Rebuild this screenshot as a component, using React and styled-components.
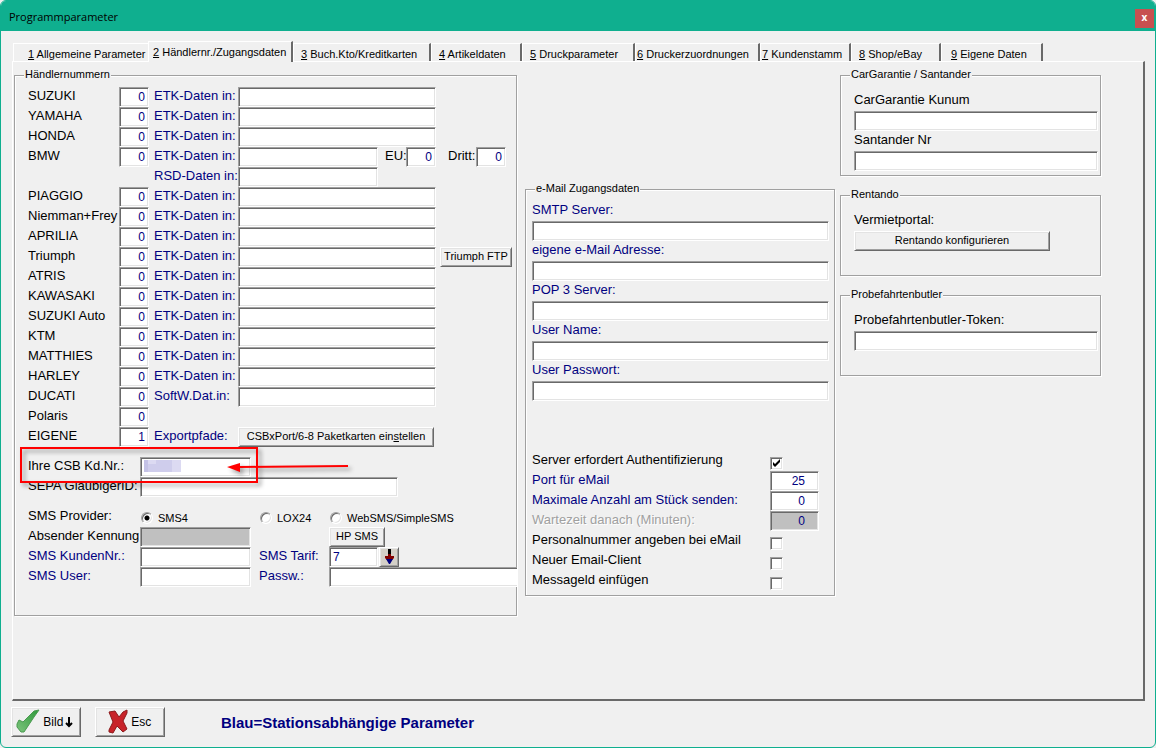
import React from "react";
import styled, { createGlobalStyle, css } from "styled-components";

const GlobalStyle = createGlobalStyle`
  * {
    box-sizing: border-box;
  }
  body {
    margin: 0;
    background: #f0f0f0;
    font-family: "Liberation Sans", Arial, sans-serif;
    font-size: 13px;
    color: #000;
  }
`;

const sunken = css`
  border: 1px solid;
  border-color: #a0a0a0 #fff #fff #a0a0a0;
  box-shadow: inset 1px 1px 0 #696969, inset -1px -1px 0 #e3e3e3;
`;

const raised = css`
  border: 1px solid;
  border-color: #fff #696969 #696969 #fff;
  box-shadow: inset 1px 1px 0 #e3e3e3, inset -1px -1px 0 #a0a0a0;
`;

const Window = styled.div`
  display: flex;
  flex-direction: column;
  min-height: 100vh;
  background: #f0f0f0;
  border: 1px solid #0faf8f;
  border-radius: 6px;
  overflow: hidden;
`;

const TitleBar = styled.header`
  display: flex;
  align-items: center;
  justify-content: space-between;
  height: 30px;
  padding: 0 1px 0 8px;
  background: #0faf8f;
`;

const Title = styled.h1`
  margin: 0;
  font-family: "Open Sans", sans-serif;
  font-size: 11px;
  font-weight: normal;
`;

const CloseButton = styled.button`
  width: 19px;
  height: 19px;
  margin-top: 4px;
  padding: 0 0 2px;
  border: 0;
  background: #c75050;
  color: #fff;
  font-family: "Open Sans", sans-serif;
  font-size: 10px;
  font-weight: bold;
  line-height: 16px;
`;

const Tabs = styled.nav`
  display: flex;
  align-items: flex-end;
  height: 30px;
  padding-left: 12px;
`;

const Tab = styled.button`
  flex: none;
  width: ${(props) => props.$width}px;
  height: ${(props) => (props.$active ? 21 : 18)}px;
  margin-bottom: ${(props) => (props.$active ? -1 : 0)}px;
  padding: ${(props) => (props.$active ? 0 : 3)}px 0 0 ${(props) => props.$indent}px;
  border: solid;
  border-width: 1px 2px 0 1px;
  border-color: #fff #696969 #fff #fff;
  background: #f0f0f0;
  font-family: inherit;
  font-size: 11px;
  line-height: ${(props) => (props.$active ? 18 : 14)}px;
  text-align: left;
  white-space: nowrap;
  color: #000;
  ${(props) =>
    props.$beforeActive &&
    css`
      border-right: 0;
    `}
  ${(props) =>
    props.$active &&
    css`
      position: relative;
    `}
`;

const Panel = styled.main`
  flex: 1;
  display: grid;
  grid-template-columns: minmax(503px, 503fr) minmax(318px, 318fr) minmax(266px, 266fr);
  align-items: start;
  margin: 0 10px 0 11px;
  padding: 6px 42px 0 1px;
  border: solid;
  border-width: 1px 2px 2px 1px;
  border-color: #fff #696969 #696969 #fff;
`;

const Group = styled.fieldset`
  min-width: 0;
  margin: 0;
  padding: ${(props) => props.$pad};
  border: 1px solid #a0a0a0;
  box-shadow: 1px 1px 0 #fff, inset 1px 1px 0 #fff;
`;

const Legend = styled.legend`
  margin-left: ${(props) => props.$shift || 0}px;
  padding: 0 1px 2px;
  background: #f0f0f0;
  font-size: 11px;
  line-height: 12px;
`;

const MailColumn = styled.div`
  padding: 114px 0 0 8px;
`;

const SideColumn = styled.div`
  display: flex;
  flex-direction: column;
  gap: 12px;
  padding-left: 5px;
`;

const Row = styled.div`
  display: flex;
  align-items: flex-start;
  position: relative;
  height: 20px;
  margin-top: ${(props) => (props.$spaced ? 10 : 0)}px;
`;

const Label = styled.label`
  flex: none;
  width: ${(props) => (props.$width ? props.$width + "px" : "auto")};
  height: 20px;
  line-height: 18px;
  white-space: nowrap;
  color: ${(props) => (props.$blue ? "#000080" : "#000")};
  ${(props) =>
    props.$off &&
    css`
      color: #a0a0a0;
      text-shadow: 1px 1px 0 #fff;
    `}
`;

const Stack = styled.div`
  display: flex;
  flex-direction: column;
`;

const Field = styled.input`
  ${sunken}
  flex: ${(props) => (props.$width ? "none" : "1 1 0")};
  width: ${(props) => (props.$width ? props.$width + "px" : "100%")};
  min-width: 0;
  height: 20px;
  padding: 0 3px;
  background: #fff;
  font-family: inherit;
  font-size: 12px;
  color: #000080;
  outline: none;
  &:disabled {
    background: #c0c0c0;
  }
`;

const StackField = styled(Field)`
  flex: none;
`;

const NumberField = styled(Field)`
  padding-right: ${(props) => props.$inset || 3}px;
  text-align: right;
`;

const OpenField = styled(Field)`
  margin-right: -1px;
  border-right: 0;
  box-shadow: inset 1px 1px 0 #696969, inset 0 -1px 0 #e3e3e3;
`;

const Gap = styled.span`
  flex: none;
  width: ${(props) => props.$width}px;
`;

const Tail = styled.div`
  display: flex;
  flex: none;
  width: ${(props) => props.$width}px;
`;

const Button = styled.button`
  ${raised}
  flex: none;
  width: ${(props) => props.$width}px;
  height: 20px;
  padding: 0 0 2px;
  background: #f0f0f0;
  font-family: inherit;
  font-size: 11px;
  white-space: nowrap;
  color: #000;
`;

const ArrowButton = styled(Button)`
  display: flex;
  align-items: center;
  justify-content: center;
  padding: 0;
  background: #d4d0c8;
`;

const Check = styled.input`
  ${sunken}
  appearance: none;
  width: 13px;
  height: 13px;
  margin: 6px 0 0;
  background: #fff;
  &:checked {
    background: #fff
      url("data:image/svg+xml,%3Csvg xmlns='http://www.w3.org/2000/svg' viewBox='0 0 11 11'%3E%3Cpath d='M2 4v3l2 2 5-5V1L4 6z'/%3E%3C/svg%3E");
  }
`;

const Radio = styled.input`
  ${sunken}
  appearance: none;
  flex: none;
  width: 12px;
  height: 12px;
  margin: 5px 5px 0 0;
  border-radius: 50%;
  background: #fff;
  &:checked {
    background: radial-gradient(circle, #000 2px, #fff 3px);
  }
`;

const RadioLabel = styled.label`
  display: flex;
  flex: none;
  width: ${(props) => props.$width}px;
  font-size: 11px;
  line-height: 22px;
  white-space: nowrap;
`;

const Mosaic = styled.svg`
  position: absolute;
  left: 116px;
  top: 3px;
`;

const Marker = styled.svg`
  position: absolute;
  left: -10px;
  top: -13px;
  z-index: 1;
  pointer-events: none;
  filter: drop-shadow(3px 3px 2px rgba(0, 0, 0, 0.4));
`;

const Footer = styled.footer`
  display: flex;
  align-items: center;
  height: 46px;
  padding: 0 10px 4px;
`;

const FooterButton = styled.button`
  ${raised}
  display: flex;
  align-items: center;
  width: 70px;
  height: 30px;
  margin-right: 14px;
  padding: 0 4px;
  background: #f0f0f0;
  font-family: inherit;
  font-size: 12px;
  color: #000;
`;

const Hint = styled.strong`
  margin-left: 42px;
  font-size: 15px;
  color: #000080;
`;

const tabs = [
  { text: "Allgemeine Parameter", width: 135, indent: 14, beforeActive: true },
  { text: "Händlernr./Zugangsdaten", width: 145, indent: 4, active: true },
  { text: "Buch.Kto/Kreditkarten", width: 138, indent: 7 },
  { text: "Artikeldaten", width: 91, indent: 7 },
  { text: "Druckparameter", width: 113, indent: 7 },
  { text: "Druckerzuordnungen", width: 125, indent: 1 },
  { text: "Kundenstamm", width: 91, indent: 1 },
  { text: "Shop/eBay", width: 90, indent: 7 },
  { text: "Eigene Daten", width: 102, indent: 9 },
];

const brandsAfterBmw = [
  "PIAGGIO",
  "Niemman+Frey",
  "APRILIA",
  "Triumph",
  "ATRIS",
  "KAWASAKI",
  "SUZUKI Auto",
  "KTM",
  "MATTHIES",
  "HARLEY",
  "DUCATI",
];

const mailFields = [
  "SMTP Server:",
  "eigene e-Mail Adresse:",
  "POP 3 Server:",
  "User Name:",
  "User Passwort:",
];

function BrandNumber({ name, value = "0" }) {
  return (
    <>
      <Label htmlFor={name} $width={91}>
        {name}
      </Label>
      <NumberField id={name} $width={30} defaultValue={value} />
      <Gap $width={5} />
    </>
  );
}

function BrandRow({ name, path = "ETK-Daten in:", children }) {
  return (
    <Row>
      <BrandNumber name={name} />
      <Label htmlFor={name + "-path"} $width={84} $blue>
        {path}
      </Label>
      <Field id={name + "-path"} />
      <Tail $width={80}>{children}</Tail>
    </Row>
  );
}

function StackedField({ label, blue }) {
  return (
    <Stack>
      <Label htmlFor={label} $blue={blue}>
        {label}
      </Label>
      <StackField id={label} />
    </Stack>
  );
}

function MailNumber({ label, value, off }) {
  return (
    <Row>
      <Label htmlFor={label} $width={238} $blue={!off} $off={off}>
        {label}
      </Label>
      <NumberField id={label} $width={49} $inset={13} defaultValue={value} disabled={off} />
    </Row>
  );
}

function MailCheck({ label, checked }) {
  return (
    <Row>
      <Label htmlFor={label} $width={238}>
        {label}
      </Label>
      <Check type="checkbox" id={label} defaultChecked={checked} />
    </Row>
  );
}

function DealerGroup() {
  return (
    <Group $pad="5px 0 28px 13px">
      <Legend $shift={-4}>Händlernummern</Legend>
      <BrandRow name="SUZUKI" />
      <BrandRow name="YAMAHA" />
      <BrandRow name="HONDA" />
      <Row>
        <BrandNumber name="BMW" />
        <Label htmlFor="bmw-etk" $width={84} $blue>
          ETK-Daten in:
        </Label>
        <Field id="bmw-etk" />
        <Tail $width={138}>
          <Gap $width={7} />
          <Label htmlFor="bmw-eu" $width={21}>
            EU:
          </Label>
          <NumberField id="bmw-eu" $width={30} defaultValue="0" />
          <Gap $width={12} />
          <Label htmlFor="bmw-dritt" $width={28}>
            Dritt:
          </Label>
          <NumberField id="bmw-dritt" $width={30} defaultValue="0" />
        </Tail>
      </Row>
      <Row>
        <Gap $width={126} />
        <Label htmlFor="bmw-rsd" $width={84} $blue>
          RSD-Daten in:
        </Label>
        <Field id="bmw-rsd" />
        <Tail $width={138} />
      </Row>
      {brandsAfterBmw.map((name) => (
        <BrandRow
          key={name}
          name={name}
          path={name === "DUCATI" ? "SoftW.Dat.in:" : "ETK-Daten in:"}
        >
          {name === "Triumph" && (
            <>
              <Gap $width={4} />
              <Button $width={72}>Triumph FTP</Button>
            </>
          )}
        </BrandRow>
      ))}
      <Row>
        <BrandNumber name="Polaris" />
      </Row>
      <Row>
        <BrandNumber name="EIGENE" value="1" />
        <Label as="span" $width={84} $blue>
          Exportpfade:
        </Label>
        <Button $width={196}>
          CSBxPort/6-8 Paketkarten ein<u>s</u>tellen
        </Button>
      </Row>

      <Row $spaced>
        <Label htmlFor="csb" $width={112}>
          Ihre CSB Kd.Nr.:
        </Label>
        <Field id="csb" $width={111} />
        <Mosaic width="37" height="12">
          <path fill="#dcdaf2" d="M0 0h37v12H0z" />
          <path fill="#c4c2e6" d="M0 0h4v12H0z" />
          <path fill="#cfcdec" d="M4 4h8v8H4zM12 0h16v12H12z" />
        </Mosaic>
        <Marker width="340" height="50" viewBox="0 0 340 50">
          <path d="M3 4h236v34H3z" fill="none" stroke="#f00" strokeWidth="2" />
          <path d="M222 23l108-1" stroke="#f00" strokeWidth="2" />
          <path d="M209 23l13-4v9z" fill="#f00" />
        </Marker>
      </Row>
      <Row>
        <Label htmlFor="sepa" $width={112}>
          SEPA GläubigerID:
        </Label>
        <Field id="sepa" />
        <Tail $width={118} />
      </Row>

      <Row $spaced>
        <Label as="span" $width={113}>
          SMS Provider:
        </Label>
        <RadioLabel $width={119}>
          <Radio type="radio" name="sms" defaultChecked />
          SMS4
        </RadioLabel>
        <RadioLabel $width={70}>
          <Radio type="radio" name="sms" />
          LOX24
        </RadioLabel>
        <RadioLabel $width={130}>
          <Radio type="radio" name="sms" />
          WebSMS/SimpleSMS
        </RadioLabel>
      </Row>
      <Row>
        <Label htmlFor="absender" $width={112}>
          Absender Kennung
        </Label>
        <Field id="absender" $width={111} disabled />
        <Gap $width={78} />
        <Button $width={56}>HP SMS</Button>
      </Row>
      <Row>
        <Label htmlFor="kunden" $width={112} $blue>
          SMS KundenNr.:
        </Label>
        <Field id="kunden" $width={111} />
        <Gap $width={8} />
        <Label htmlFor="tarif" $width={70} $blue>
          SMS Tarif:
        </Label>
        <Field id="tarif" $width={49} defaultValue="7" />
        <Gap $width={1} />
        <ArrowButton $width={20} aria-label="SMS Tarif wählen">
          <svg width="10" height="16" viewBox="0 0 10 16">
            <path d="M4 0h3v6H4z" fill="#000" />
            <path d="M4 5h3v2h3v2L8 11H3L1 9V7h3z" fill="#800000" />
            <path d="M2 10h7l-3 5H5z" fill="#000080" />
          </svg>
        </ArrowButton>
      </Row>
      <Row>
        <Label htmlFor="user" $width={112} $blue>
          SMS User:
        </Label>
        <Field id="user" $width={111} />
        <Gap $width={8} />
        <Label htmlFor="passw" $width={70} $blue>
          Passw.:
        </Label>
        <OpenField id="passw" />
      </Row>
    </Group>
  );
}

const MailSettings = styled.div`
  padding-top: 50px;
`;

function MailGroup() {
  return (
    <Group $pad="5px 5px 4px 6px">
      <Legend $shift={3}>e-Mail Zugangsdaten</Legend>
      {mailFields.map((label) => (
        <StackedField key={label} label={label} blue />
      ))}
      <MailSettings>
        <MailCheck label="Server erfordert Authentifizierung" checked />
        <MailNumber label="Port für eMail" value="25" />
        <MailNumber label="Maximale Anzahl am Stück senden:" value="0" />
        <MailNumber label="Wartezeit danach (Minuten):" value="0" off />
        <MailCheck label="Personalnummer angeben bei eMail" />
        <MailCheck label="Neuer Email-Client" />
        <MailCheck label="Messageld einfügen" />
      </MailSettings>
    </Group>
  );
}

function App() {
  return (
    <Window>
      <GlobalStyle />
      <TitleBar>
        <Title>Programmparameter</Title>
        <CloseButton aria-label="Schließen">x</CloseButton>
      </TitleBar>
      <Tabs>
        {tabs.map((tab, i) => (
          <Tab
            key={tab.text}
            $width={tab.width}
            $indent={tab.indent}
            $active={tab.active}
            $beforeActive={tab.beforeActive}
          >
            <u>{i + 1}</u> {tab.text}
          </Tab>
        ))}
      </Tabs>
      <Panel>
        <DealerGroup />
        <MailColumn>
          <MailGroup />
        </MailColumn>
        <SideColumn>
          <Group $pad="9px 2px 4px 13px">
            <Legend $shift={-4}>CarGarantie / Santander</Legend>
            <StackedField label="CarGarantie Kunum" />
            <StackedField label="Santander Nr" />
          </Group>
          <Group $pad="9px 2px 24px 13px">
            <Legend $shift={-4}>Rentando</Legend>
            <Stack>
              <Label as="span">Vermietportal:</Label>
              <Button $width={196}>Rentando konfigurieren</Button>
            </Stack>
          </Group>
          <Group $pad="9px 2px 24px 13px">
            <Legend $shift={-4}>Probefahrtenbutler</Legend>
            <StackedField label="Probefahrtenbutler-Token:" />
          </Group>
        </SideColumn>
      </Panel>
      <Footer>
        <FooterButton>
          <svg width="24" height="26" viewBox="0 0 24 26">
            <defs>
              <linearGradient id="tick" x1="1" y1="0" x2="0" y2="1">
                <stop offset="0" stopColor="#2f9a3c" />
                <stop offset="1" stopColor="#7cc47c" />
              </linearGradient>
            </defs>
            <path
              d="M1 15l2-4 4 2L18 2l5-1-5 7-6 9-4 6H5l-4-5z"
              fill="url(#tick)"
              stroke="#4a9a50"
            />
          </svg>
          &nbsp;Bild
          <svg width="10" height="12" viewBox="0 0 10 12">
            <path d="M6 1v9M3 7l3 3 3-3" fill="none" stroke="#000" strokeWidth="2" />
          </svg>
        </FooterButton>
        <FooterButton>
          <Gap $width={8} />
          <svg width="20" height="26" viewBox="0 0 20 26">
            <path
              d="M1 3l6-1 4 6 4-5 4-2v3l-4 8 4 8-4 3-6-6-4 7-4-1v-2l4-8z"
              fill="#c8232a"
              stroke="#8c1a1c"
            />
          </svg>
          &nbsp;Esc
        </FooterButton>
        <Hint>Blau=Stationsabhängige Parameter</Hint>
      </Footer>
    </Window>
  );
}

export default App;
